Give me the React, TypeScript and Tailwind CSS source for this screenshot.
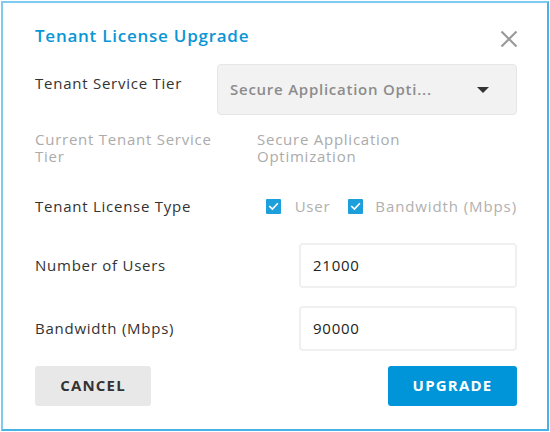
import React from "react";

function Check() {
  return (
    <span className="flex h-[15px] w-[15px] items-center justify-center rounded-[1px] bg-[#1d9fdb]">
      <svg width="11" height="11" viewBox="0 0 11 11" fill="none">
        <path d="M1.8 5.6 L4.4 8.1 L9.3 2.9" stroke="white" strokeWidth="1.7" strokeLinecap="square" />
      </svg>
    </span>
  );
}

export default function App() {
  return (
    <div
      className="h-[432px] w-[550px] bg-white p-px tracking-[0.75px]"
      style={{ fontFamily: '"Open Sans", "Liberation Sans", sans-serif' }}
    >
      <div className="flex h-full w-full flex-col border-2 border-[#49b1e6] border-t-[#7fcaf0] border-l-[#7fcaf0] pl-[32px] pr-[30px]">
        <div className="flex items-start justify-between pt-[22px]">
          <h1 className="text-[17px] font-semibold leading-[22px] text-[#0a96d6]">Tenant License Upgrade</h1>
          <svg width="18" height="18" viewBox="0 0 18 18" className="mt-[5px] mr-[-1px]">
            <path d="M1.5 1.5 L16.5 16.5 M16.5 1.5 L1.5 16.5" stroke="#9a9a9a" strokeWidth="2.2" />
          </svg>
        </div>

        <div className="mt-[16px] flex items-start justify-between">
          <span className="pt-[9px] text-[15px] leading-[20px] text-[#333]">Tenant Service Tier</span>
          <div className="flex h-[51px] w-[300px] items-center justify-between rounded-[4px] border border-[#e6e6e6] bg-[#f2f2f2] pl-[12px] pr-[27px]">
            <span className="text-[15px] font-semibold text-[#8c8c8c]">Secure Application Opti...</span>
            <svg width="12" height="6" viewBox="0 0 12 6">
              <path d="M0 0 L12 0 L6 6 Z" fill="#333" />
            </svg>
          </div>
        </div>

        <div className="mt-[16px] flex items-start">
          <div className="w-[222px]">
            <span className="block max-w-[190px] text-[15px] leading-[17px] text-[#ababab]">Current Tenant Service Tier</span>
          </div>
          <span className="w-[200px] text-[15px] leading-[17px] text-[#ababab]">Secure Application Optimization</span>
        </div>

        <div className="mt-[30px] flex items-center justify-between">
          <span className="text-[15px] leading-[20px] text-[#333]">Tenant License Type</span>
          <div className="flex items-center">
            <Check />
            <span className="ml-[14px] text-[15px] text-[#b0b0b0]">User</span>
            <span className="ml-[18px]"><Check /></span>
            <span className="ml-[12px] text-[15px] tracking-[0.9px] text-[#b0b0b0]">Bandwidth (Mbps)</span>
          </div>
        </div>

        <div className="mt-[25px] flex items-center justify-between">
          <span className="text-[15px] leading-[20px] text-[#333]">Number of Users</span>
          <div className="flex h-[45px] w-[218px] items-center rounded-[4px] border-2 border-[#f0f0f0] bg-white pl-[12px] text-[15px] text-[#222]">
            21000
          </div>
        </div>

        <div className="mt-[18px] flex items-center justify-between">
          <span className="text-[15px] leading-[20px] text-[#333]">Bandwidth (Mbps)</span>
          <div className="flex h-[45px] w-[218px] items-center rounded-[4px] border-2 border-[#f0f0f0] bg-white pl-[12px] text-[15px] text-[#222]">
            90000
          </div>
        </div>

        <div className="mt-[15px] flex items-center justify-between">
          <button className="h-[40px] w-[116px] rounded-[3px] bg-[#e8e8e8] text-[15px] font-bold tracking-[1.2px] text-[#333]">
            CANCEL
          </button>
          <button className="h-[40px] w-[129px] rounded-[3px] bg-[#0095d9] text-[15px] font-bold tracking-[1.2px] text-white">
            UPGRADE
          </button>
        </div>
      </div>
    </div>
  );
}
